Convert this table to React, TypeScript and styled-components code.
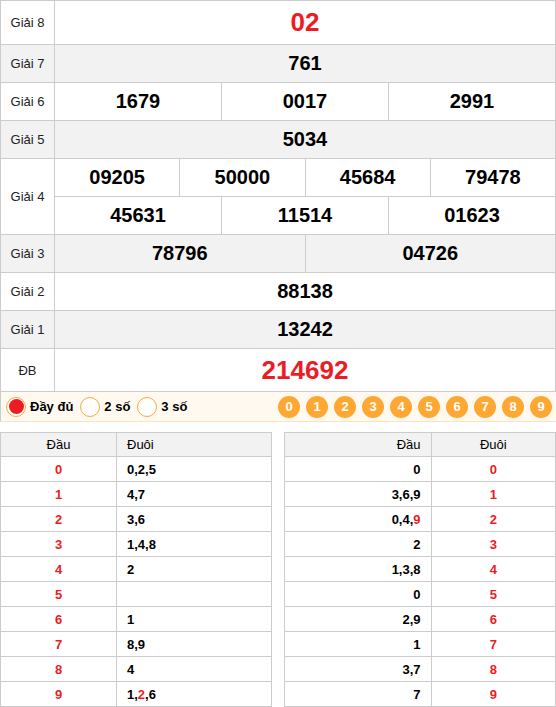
import React from "react";
import styled, { createGlobalStyle } from "styled-components";

const Global = createGlobalStyle`
  html, body { margin: 0; padding: 0; background: #fff; }
  body { font-family: "Liberation Sans", Arial, sans-serif; color: #000; }
  * { box-sizing: border-box; }
`;

const RED = "#ed1c24";
const GRID = "#cccccc";

const Page = styled.div`
  width: 556px;
`;

const Board = styled.div`
  border-top: 1px solid ${GRID};
  border-left: 1px solid ${GRID};
`;

const PrizeRow = styled.div<{ $alt?: boolean }>`
  display: grid;
  grid-template-columns: 54px 1fr;
  background: ${(p) => (p.$alt ? "#f2f2f2" : "#fff")};
`;

const Label = styled.div`
  display: flex;
  align-items: center;
  justify-content: center;
  font-size: 13px;
  color: #222;
  border-right: 1px solid ${GRID};
  border-bottom: 1px solid ${GRID};
`;

const Values = styled.div`
  display: flex;
  flex-direction: column;
`;

const SubRow = styled.div<{ $cols: number; $h: number }>`
  display: grid;
  grid-template-columns: repeat(${(p) => p.$cols}, 1fr);
  height: ${(p) => p.$h}px;
`;

const Num = styled.div<{ $big?: boolean }>`
  display: flex;
  align-items: center;
  justify-content: center;
  font-weight: bold;
  font-size: ${(p) => (p.$big ? 26 : 20)}px;
  color: ${(p) => (p.$big ? RED : "#000")};
  border-right: 1px solid ${GRID};
  border-bottom: 1px solid ${GRID};
`;

const Filter = styled.div`
  display: flex;
  align-items: center;
  justify-content: space-between;
  height: 30px;
  padding: 0 4px 0 5px;
  background: #fff9ef;
  border-left: 1px solid ${GRID};
  border-bottom: 1px solid #fde2bd;
`;

const Options = styled.div`
  display: flex;
  align-items: center;
  gap: 7px;
`;

const Option = styled.label`
  display: flex;
  align-items: center;
  gap: 4px;
  font-size: 13px;
  font-weight: bold;
`;

const Radio = styled.span<{ $on?: boolean }>`
  width: 20px;
  height: 20px;
  border-radius: 50%;
  border: 1px solid #f6a93b;
  background: #fff;
  display: flex;
  align-items: center;
  justify-content: center;
  &::after {
    content: "";
    width: 15px;
    height: 15px;
    border-radius: 50%;
    background: ${(p) => (p.$on ? RED : "transparent")};
  }
`;

const Balls = styled.div`
  display: flex;
  gap: 6px;
`;

const Ball = styled.span`
  width: 22px;
  height: 22px;
  border-radius: 50%;
  background: #ffa733;
  color: #fff;
  font-weight: bold;
  font-size: 13px;
  display: flex;
  align-items: center;
  justify-content: center;
`;

const LotoWrap = styled.div`
  display: flex;
  justify-content: space-between;
  margin-top: 10px;
`;

const Loto = styled.div<{ $first: number }>`
  width: 49%;
  border-top: 1px solid ${GRID};
  border-left: 1px solid ${GRID};
  display: grid;
  grid-template-columns: ${(p) => p.$first}px 1fr;
`;

const Cell = styled.div<{
  $head?: boolean;
  $align: "left" | "center" | "right";
  $red?: boolean;
}>`
  height: ${(p) => (p.$head ? 24 : 25)}px;
  display: flex;
  align-items: center;
  justify-content: ${(p) =>
    p.$align === "left" ? "flex-start" : p.$align === "right" ? "flex-end" : "center"};
  padding: 0 10px;
  font-size: 13px;
  font-weight: ${(p) => (p.$head ? "normal" : "bold")};
  color: ${(p) => (p.$red ? RED : "#000")};
  background: ${(p) => (p.$head ? "#f2f2f2" : "#fff")};
  border-right: 1px solid ${GRID};
  border-bottom: 1px solid ${GRID};
`;

const Hi = styled.span`
  color: ${RED};
`;

type Prize = { label: string; rows: string[][]; big?: boolean; h: number };

const prizes: Prize[] = [
  { label: "Giải 8", rows: [["02"]], big: true, h: 44 },
  { label: "Giải 7", rows: [["761"]], h: 38 },
  { label: "Giải 6", rows: [["1679", "0017", "2991"]], h: 38 },
  { label: "Giải 5", rows: [["5034"]], h: 38 },
  {
    label: "Giải 4",
    rows: [
      ["09205", "50000", "45684", "79478"],
      ["45631", "11514", "01623"],
    ],
    h: 38,
  },
  { label: "Giải 3", rows: [["78796", "04726"]], h: 38 },
  { label: "Giải 2", rows: [["88138"]], h: 38 },
  { label: "Giải 1", rows: [["13242"]], h: 38 },
  { label: "ĐB", rows: [["214692"]], big: true, h: 43 },
];

const dau: [string, React.ReactNode][] = [
  ["0", "0,2,5"],
  ["1", "4,7"],
  ["2", "3,6"],
  ["3", "1,4,8"],
  ["4", "2"],
  ["5", ""],
  ["6", "1"],
  ["7", "8,9"],
  ["8", "4"],
  ["9", <>1,<Hi>2</Hi>,6</>],
];

const duoi: [React.ReactNode, string][] = [
  ["0", "0"],
  ["3,6,9", "1"],
  [<>0,4,<Hi>9</Hi></>, "2"],
  ["2", "3"],
  ["1,3,8", "4"],
  ["0", "5"],
  ["2,9", "6"],
  ["1", "7"],
  ["3,7", "8"],
  ["7", "9"],
];

export default function App() {
  return (
    <Page>
      <Global />
      <Board>
        {prizes.map((p, i) => (
          <PrizeRow key={p.label} $alt={i % 2 === 1}>
            <Label>{p.label}</Label>
            <Values>
              {p.rows.map((r, j) => (
                <SubRow key={j} $cols={r.length} $h={p.h}>
                  {r.map((n, k) => (
                    <Num key={k} $big={p.big}>
                      {n}
                    </Num>
                  ))}
                </SubRow>
              ))}
            </Values>
          </PrizeRow>
        ))}
      </Board>
      <Filter>
        <Options>
          <Option>
            <Radio $on />
            Đầy đủ
          </Option>
          <Option>
            <Radio />2 số
          </Option>
          <Option>
            <Radio />3 số
          </Option>
        </Options>
        <Balls>
          {Array.from({ length: 10 }, (_, i) => (
            <Ball key={i}>{i}</Ball>
          ))}
        </Balls>
      </Filter>
      <LotoWrap>
        <Loto $first={116}>
          <Cell $head $align="center">Đầu</Cell>
          <Cell $head $align="left">Đuôi</Cell>
          {dau.map(([a, b]) => (
            <React.Fragment key={a}>
              <Cell $align="center" $red>{a}</Cell>
              <Cell $align="left">{b}</Cell>
            </React.Fragment>
          ))}
        </Loto>
        <Loto $first={147}>
          <Cell $head $align="right">Đầu</Cell>
          <Cell $head $align="center">Đuôi</Cell>
          {duoi.map(([a, b]) => (
            <React.Fragment key={b}>
              <Cell $align="right">{a}</Cell>
              <Cell $align="center" $red>{b}</Cell>
            </React.Fragment>
          ))}
        </Loto>
      </LotoWrap>
    </Page>
  );
}
